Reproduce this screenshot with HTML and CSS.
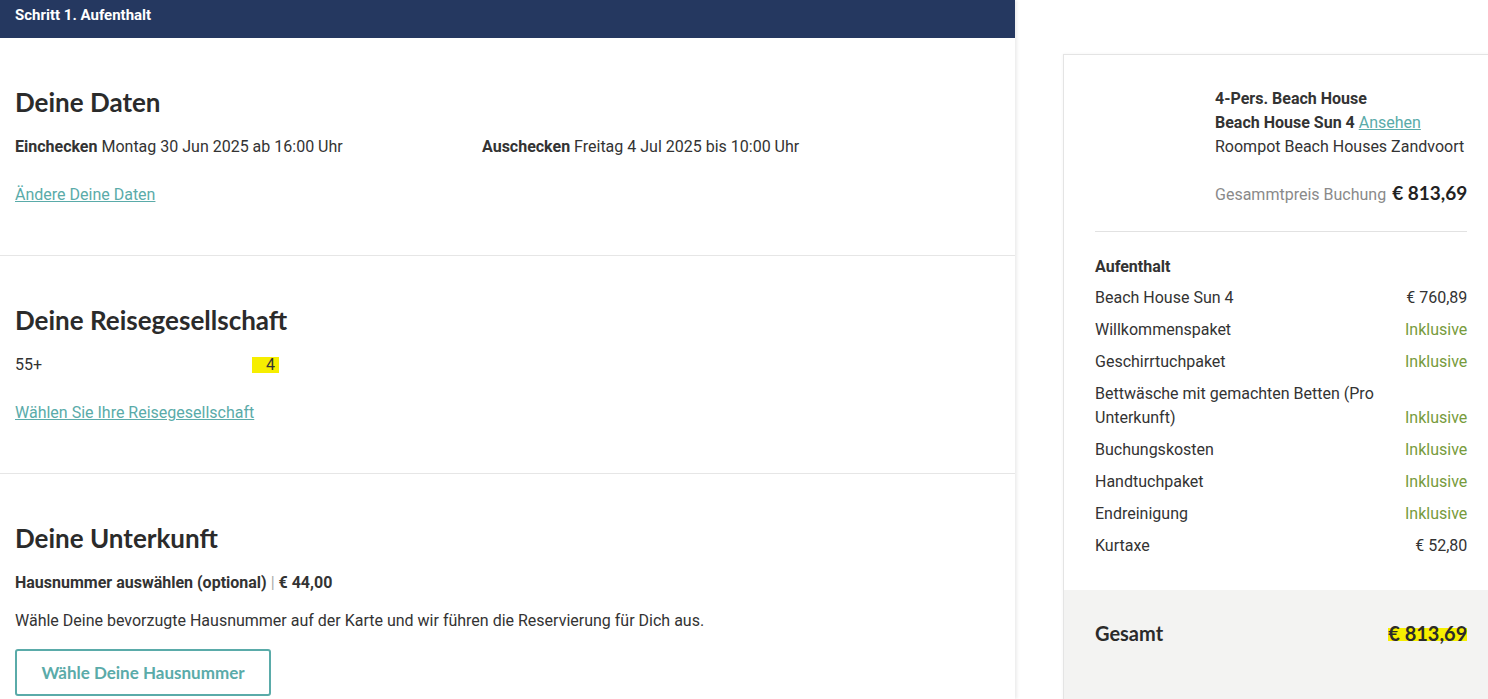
FILE: index.html
```html
<!DOCTYPE html>
<html lang="de">
<head>
    <meta charset="UTF-8">
    <meta name="viewport" content="width=device-width, initial-scale=1.0">
    <title>Schritt 1. Aufenthalt</title>
    <link rel="stylesheet" href="styles.css">
</head>
<body>
    <div class="page">
        <main class="booking">
            <div class="step-bar">Schritt 1. Aufenthalt</div>

            <section class="block">
                <h2>Deine Daten</h2>
                <div class="dates">
                    <div><b>Einchecken</b> Montag 30 Jun 2025 ab 16:00 Uhr</div>
                    <div><b>Auschecken</b> Freitag 4 Jul 2025 bis 10:00 Uhr</div>
                </div>
                <a href="#" class="link">Ändere Deine Daten</a>
            </section>

            <section class="block">
                <h2>Deine Reisegesellschaft</h2>
                <div class="party">
                    <span class="party-label">55+</span>
                    <span class="marked">4</span>
                </div>
                <a href="#" class="link">Wählen Sie Ihre Reisegesellschaft</a>
            </section>

            <section class="block last">
                <h2>Deine Unterkunft</h2>
                <p class="option"><b>Hausnummer auswählen (optional)</b> <span class="sep">|</span> <b>€ 44,00</b></p>
                <p class="note">Wähle Deine bevorzugte Hausnummer auf der Karte und wir führen die Reservierung für Dich aus.</p>
                <button class="outline-btn">Wähle Deine Hausnummer</button>
            </section>
        </main>

        <aside class="summary">
            <div class="summary-card">
                <div class="stay">
                    <div class="thumb"></div>
                    <div class="stay-info">
                        <div class="strong">4-Pers. Beach House</div>
                        <div class="strong">Beach House Sun 4 <a href="#" class="link normal">Ansehen</a></div>
                        <div>Roompot Beach Houses Zandvoort</div>
                        <div class="total-line">
                            <span class="muted">Gesammtpreis Buchung</span>
                            <span class="big-price">€ 813,69</span>
                        </div>
                    </div>
                </div>

                <div class="costs">
                    <div class="costs-title">Aufenthalt</div>
                    <div class="cost-row"><span>Beach House Sun 4</span><span>€ 760,89</span></div>
                    <div class="cost-row"><span>Willkommenspaket</span><span class="incl">Inklusive</span></div>
                    <div class="cost-row"><span>Geschirrtuchpaket</span><span class="incl">Inklusive</span></div>
                    <div class="cost-row"><span>Bettwäsche mit gemachten Betten (Pro Unterkunft)</span><span class="incl">Inklusive</span></div>
                    <div class="cost-row"><span>Buchungskosten</span><span class="incl">Inklusive</span></div>
                    <div class="cost-row"><span>Handtuchpaket</span><span class="incl">Inklusive</span></div>
                    <div class="cost-row"><span>Endreinigung</span><span class="incl">Inklusive</span></div>
                    <div class="cost-row"><span>Kurtaxe</span><span>€ 52,80</span></div>
                </div>
            </div>
            <div class="grand-total">
                <span>Gesamt</span>
                <span class="marked-total">€ 813,69</span>
            </div>
        </aside>
    </div>
</body>
</html>
```

FILE: styles.css
```css
body {
    margin: 0;
    font-family: Roboto, "Liberation Sans", Arial, sans-serif;
    font-size: 16px;
    color: #333;
    background: #fff;
    overflow: hidden;
}
.page {
    display: flex;
    align-items: flex-start;
    width: 1500px;
}
.booking {
    width: 1015px;
    flex-shrink: 0;
    min-height: 699px;
    box-shadow: 2px 0 3px rgba(0, 0, 0, 0.08);
}
.step-bar {
    background-color: #253860;
    color: #fff;
    font-weight: 700;
    font-size: 15px;
    height: 38px;
    line-height: 30px;
    padding: 0 15px;
}
.block {
    padding: 51px 15px 48px;
    border-bottom: 1px solid #e6e6e6;
}
.block.last {
    border-bottom: none;
    padding-bottom: 0;
}
h2 {
    font-family: Lato, "Noto Sans", sans-serif;
    font-weight: 700;
    font-size: 26px;
    color: #2b2b2b;
    margin: 0 0 20px;
    line-height: 26px;
}
.dates {
    display: flex;
    line-height: 24px;
}
.dates div {
    width: 467px;
}
.link {
    color: #5aaba9;
    text-decoration: underline;
}
.block .link {
    display: inline-block;
    margin-top: 24px;
    line-height: 24px;
}
.party {
    display: flex;
    line-height: 24px;
}
.party-label {
    width: 237px;
}
.marked {
    background: linear-gradient(to bottom, transparent 15%, #f6ee00 15%, #f6ee00 85%, transparent 85%);
    padding: 0 4px 0 14px;
}
.option {
    margin: 0;
    line-height: 24px;
}
.sep {
    color: #aaa;
}
.note {
    margin: 14px 0 16px;
    line-height: 24px;
}
.outline-btn {
    font-family: Lato, "Noto Sans", sans-serif;
    font-weight: 700;
    font-size: 17px;
    color: #5aaba9;
    background: #fff;
    border: 2px solid #5aaba9;
    border-radius: 3px;
    width: 256px;
    height: 47px;
}
.summary {
    margin-left: 48px;
    margin-top: 54px;
    width: 436px;
    border: 1px solid #e4e4e4;
    box-shadow: 0 0 3px rgba(0, 0, 0, 0.05);
}
.summary-card {
    padding: 32px 32px 24px 31px;
}
.stay {
    display: flex;
    padding-bottom: 25px;
    border-bottom: 1px solid #e2e2e2;
}
.thumb {
    width: 100px;
    height: 100px;
    margin-right: 20px;
    flex-shrink: 0;
}
.stay-info {
    line-height: 24px;
    white-space: nowrap;
}
.strong {
    font-weight: 700;
}
.link.normal {
    font-weight: 400;
}
.total-line {
    margin-top: 23px;
    display: flex;
    align-items: baseline;
    gap: 6px;
    line-height: 22px;
}
.muted {
    color: #8a8a8a;
}
.big-price {
    font-family: Lato, "Noto Sans", sans-serif;
    font-weight: 700;
    font-size: 19px;
    color: #222;
}
.costs {
    padding-top: 23px;
}
.costs-title {
    font-weight: 700;
    line-height: 24px;
    margin-bottom: 7px;
}
.cost-row {
    display: flex;
    justify-content: space-between;
    align-items: flex-end;
    line-height: 24px;
    margin-bottom: 8px;
}
.cost-row span:first-child {
    max-width: 290px;
}
.incl {
    color: #779b3c;
}
.grand-total {
    background: #f3f3f2;
    display: flex;
    justify-content: space-between;
    padding: 31px 32px 60px 31px;
    font-family: Lato, "Noto Sans", sans-serif;
    font-weight: 700;
    font-size: 20px;
    color: #2b2b2b;
}
.marked-total {
    background: linear-gradient(to bottom, transparent 30%, #f6ee00 30%, #f6ee00 85%, transparent 85%);
}
```
